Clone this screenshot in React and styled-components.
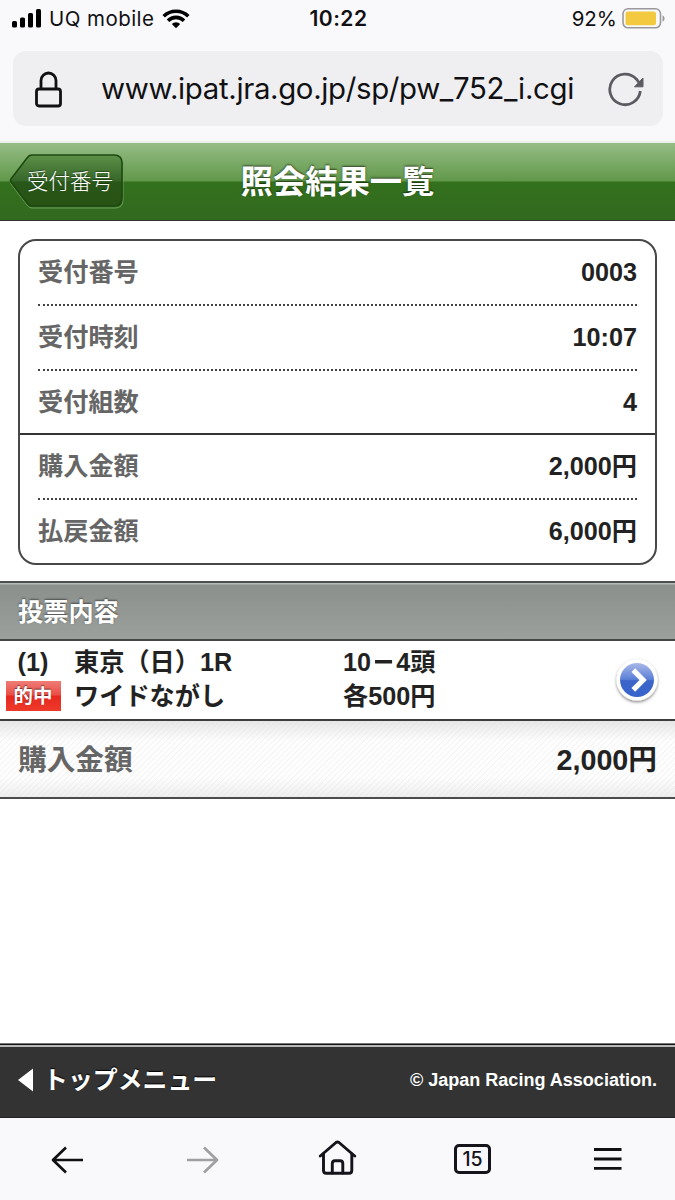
import React from 'react';
import styled, { createGlobalStyle } from "styled-components";

const GlobalStyle = createGlobalStyle`
  * {
    box-sizing: border-box;
  }

  body {
    margin: 0;
    background: #ffffff;
  }
`;

const Screen = styled.div`
  display: flex;
  flex-direction: column;
  width: 675px;
  height: 1200px;
  overflow: hidden;
  background: #ffffff;
  color: #222222;
  font-family: "Liberation Sans", "Noto Sans CJK JP", sans-serif;
  font-weight: 700;
`;

const BrowserTop = styled.div`
  height: 143px;
  flex: none;
  background: #f9f9fc;
  border-bottom: 2px solid #eaf0ea;
  font-family: "Inter", sans-serif;
  font-weight: 400;
  color: #111114;
`;

const StatusBar = styled.div`
  display: grid;
  grid-template-columns: 1fr auto 1fr;
  align-items: center;
  height: 37px;
  padding: 0 10px 0 12px;
  font-size: 20.5px;
  line-height: 37px;
`;

const Carrier = styled.div`
  display: flex;
  align-items: center;
  gap: 8px;
  letter-spacing: 0.45px;

  span {
    margin-left: -1px;
  }
`;

const Clock = styled.div`
  font-size: 21px;
  font-weight: 600;
  letter-spacing: 0.5px;
`;

const Battery = styled.div`
  display: flex;
  align-items: center;
  justify-content: flex-end;
  gap: 5px;
`;

const AddressBar = styled.div`
  display: flex;
  align-items: center;
  height: 75px;
  margin: 14px 12px 0 13px;
  padding: 0 18px 0 21px;
  border-radius: 13px;
  background: #efeff2;
`;

const Url = styled.div`
  flex: 1;
  padding: 1px 0 0 37px;
  font-size: 29.4px;
  letter-spacing: -0.34px;
  line-height: 78px;
  white-space: nowrap;
`;

const Header = styled.header`
  display: grid;
  grid-template-columns: 1fr auto 1fr;
  align-items: center;
  height: 78px;
  flex: none;
  padding: 0 9px;
  border-bottom: 1px solid #333333;
  background: linear-gradient(#96bd86 0, #61984a 38px, #33711d 39px, #32691f 100%);
`;

const BackButton = styled.a`
  position: relative;
  width: 115px;
  height: 56px;
  padding-left: 18px;
  color: #ffffff;
  font-family: "Noto Sans CJK JP", sans-serif;
  font-size: 21.5px;
  font-weight: 300;
  line-height: 52px;
  white-space: nowrap;
  text-shadow: 0 -1px 1px rgba(0, 0, 0, 0.4);

  svg {
    position: absolute;
    left: 0;
    top: -1px;
  }

  span {
    position: relative;
  }
`;

const Title = styled.h1`
  margin: 0;
  color: #ffffff;
  font-size: 32.3px;
  line-height: 74px;
  text-shadow: 0 -1px 2px rgba(0, 0, 0, 0.6);
`;

const Summary = styled.dl`
  height: 326px;
  flex: none;
  margin: 18px 18px 16px;
  border: 2px solid #48484a;
  border-radius: 18px;
`;

const SummaryGroup = styled.div`
  padding: 0 18px;

  & + & {
    border-top: 2px solid #333333;
  }
`;

const SummaryRow = styled.div`
  display: flex;
  justify-content: space-between;
  height: 65px;
  font-size: 25.2px;
  line-height: 62px;

  &:first-child {
    height: 63px;
  }

  &:last-child {
    height: 64px;
  }

  & + & {
    border-top: 2px dotted #444444;
  }
`;

const Label = styled.dt`
  color: #666666;
`;

const Value = styled.dd`
  margin: 0;
`;

const SectionTitle = styled.h2`
  height: 60px;
  flex: none;
  margin: 0;
  padding-left: 18px;
  border-top: 2px solid #4c4f4e;
  border-bottom: 2px solid #454545;
  background: linear-gradient(#b5bab8 0, #b5bab8 1px, #8b908c 2px, #9ba09d 100%);
  color: #ffffff;
  font-size: 25.2px;
  line-height: 58px;
  text-shadow: 0 -1px 2px rgba(0, 0, 0, 0.5);
`;

const Bet = styled.div`
  display: grid;
  grid-template-columns: 62px 269px 1fr 46px;
  align-items: center;
  height: 78px;
  flex: none;
  padding: 0 15px 0 2px;
`;

const BetColumn = styled.div`
  padding: 0 0 2px ${props => (props.$flush ? 0 : "10px")};
  text-align: ${props => (props.$flush ? "center" : "left")};
  font-size: 25.2px;
  line-height: 34px;
  white-space: nowrap;
`;

const HitBadge = styled.div`
  width: 55px;
  height: 30px;
  margin: 2px auto;
  background: linear-gradient(#ee7d77 0, #ea4f46 14px, #e6281f 15px, #ee3a2a 100%);
  color: #ffffff;
  font-size: 19.5px;
  line-height: 30px;
  text-shadow: 0 -1px 1px rgba(0, 0, 0, 0.5);
`;

const Dash = styled.span`
  display: inline-block;
  transform: scaleX(0.9);
  -webkit-text-stroke: 1px #222222;
`;

const Total = styled.div`
  display: flex;
  justify-content: space-between;
  height: 80px;
  flex: none;
  padding: 0 18px;
  border-top: 2px solid #3c3c3c;
  border-bottom: 2px solid #4c4c4c;
  background:
    linear-gradient(rgba(215, 215, 215, 0.6) 0, rgba(255, 255, 255, 0) 20px, rgba(255, 255, 255, 0) 56px, rgba(215, 215, 215, 0.4) 100%),
    repeating-linear-gradient(135deg, #fefefe 0, #fefefe 2.5px, #f3f3f3 3.2px, #f3f3f3 3.5px, #fefefe 4px);
  font-size: 28.7px;
  line-height: 78px;
`;

const TotalLabel = styled.span`
  color: #666666;
`;

const Footer = styled.footer`
  display: flex;
  align-items: center;
  justify-content: space-between;
  height: 75px;
  flex: none;
  margin-top: auto;
  padding: 0 18px;
  border-bottom: 1px solid #222222;
  background: linear-gradient(#777777 0, #777777 1px, #111111 1px, #111111 2px, #b8b8b8 2px, #b8b8b8 4px, #333333 4px);
  color: #ffffff;
`;

const TopMenu = styled.a`
  display: flex;
  align-items: center;
  gap: 9px;
  font-size: 24.9px;
  line-height: 72px;
  text-shadow: 0 -1px 1px #000000;
`;

const Copyright = styled.small`
  font-size: 18.05px;
  line-height: 72px;
`;

const BrowserTools = styled.nav`
  display: grid;
  grid-template-columns: repeat(5, 1fr);
  align-items: center;
  justify-items: center;
  height: 82px;
  flex: none;
  background: #f9f9fc;
`;

const TabCount = styled.div`
  width: 37px;
  height: 30px;
  border: 3px solid #15141a;
  border-radius: 5px;
  color: #15141a;
  font-family: "Inter", sans-serif;
  font-size: 19.5px;
  font-weight: 500;
  line-height: 25px;
  text-align: center;
`;

const summary = [
  [
    { label: '受付番号', value: '0003' },
    { label: '受付時刻', value: '10:07' },
    { label: '受付組数', value: '4' },
  ],
  [
    { label: '購入金額', value: '2,000円' },
    { label: '払戻金額', value: '6,000円' },
  ],
];

const SignalIcon = () => (
  <svg width="30" height="20" viewBox="0 0 30 20">
    <rect x="0" y="12" width="5" height="6.5" rx="1.5" />
    <rect x="8" y="8.5" width="5" height="10" rx="1.5" />
    <rect x="16" y="4" width="5" height="14.5" rx="1.5" />
    <rect x="24" y="0" width="5" height="18.5" rx="1.5" />
  </svg>
);

const WifiIcon = () => (
  <svg width="28" height="20" viewBox="0 0 28 20">
    <g fill="none" stroke="#000" strokeWidth="3.6">
      <path d="M1.7 7.2a17.6 17.6 0 0 1 24.6 0" />
      <path d="M6 11.7a11.4 11.4 0 0 1 16 0" />
    </g>
    <path d="M14 19.3l4.2-4.3a6 6 0 0 0-8.4 0z" />
  </svg>
);

const BatteryIcon = () => (
  <svg width="43" height="22" viewBox="0 0 43 22">
    <rect x="1" y="0.8" width="37.5" height="19" rx="5" fill="none" stroke="#9a9a9e" strokeWidth="1.6" />
    <rect x="3.5" y="3.5" width="30.5" height="13.7" rx="2.5" fill="#f3c940" />
    <path d="M40.5 7.2v6.5a3.6 3.6 0 0 0 0-6.5z" fill="#9a9a9e" />
  </svg>
);

const LockIcon = () => (
  <svg width="30" height="38" viewBox="0 0 30 38" fill="none" stroke="#111114" strokeWidth="2.8">
    <rect x="2.5" y="19" width="24" height="17" rx="2.5" />
    <path d="M7 19V10.500a7.500 7.500 0 0 1 15 0V19" />
  </svg>
);

const ReloadIcon = () => (
  <svg width="37" height="36" viewBox="0 0 37 36">
    <path d="M32.300 20A15.300 15.300 0 1 1 28.500 8.200L31 11.500" fill="none" stroke="#5b5b62" strokeWidth="2.800" />
    <path d="M35 7v8.800H26.500z" fill="#5b5b62" stroke="#5b5b62" strokeLinejoin="round" />
  </svg>
);

const BackShape = () => (
  <svg width="115" height="56" viewBox="0 0 115 56">
    <defs>
      <linearGradient id="back" x1="0" y1="0" x2="0" y2="1">
        <stop offset="0" stopColor="#5d9048" />
        <stop offset="0.5" stopColor="#37672a" />
        <stop offset="0.53" stopColor="#285719" />
        <stop offset="1" stopColor="#285314" />
      </linearGradient>
    </defs>
    <path d="M23 3H106Q114 3 114 11V47Q114 55 106 55H23Q20 55 18 52L2 31Q1 29 2 27L18 6Q20 3 23 3Z" fill="none" stroke="#6d9f5a" strokeWidth="1" />
    <path d="M23 2H105Q113 2 113 10V45Q113 53 105 53H23Q20 53 18 50L2 29Q1 27.500 2 26L18 5Q20 2 23 2Z" fill="url(#back)" stroke="#1d4910" strokeWidth="1.600" />
  </svg>
);

const DetailIcon = () => (
  <svg width="46" height="50" viewBox="0 0 46 50">
    <defs>
      <linearGradient id="blue" x1="0" y1="0" x2="0" y2="1">
        <stop offset="0" stopColor="#a9b9e8" />
        <stop offset="0.48" stopColor="#5c80d6" />
        <stop offset="0.52" stopColor="#3d65c9" />
        <stop offset="1" stopColor="#3664cd" />
      </linearGradient>
      <filter id="shadow" x="-20%" y="-20%" width="140%" height="150%">
        <feDropShadow dx="0" dy="1.5" stdDeviation="1.5" floodOpacity="0.5" />
      </filter>
    </defs>
    <circle cx="23" cy="25" r="20.500" fill="#fff" filter="url(#shadow)" />
    <circle cx="23" cy="25" r="17" fill="url(#blue)" />
    <path d="M19.300 15.200l9.800 9.800-9.800 9.800" fill="none" stroke="#fff" strokeWidth="5.200" />
  </svg>
);

const ArrowIcon = ({ forward }) => (
  <svg width="34" height="30" viewBox="0 -1 34 30" fill="none" stroke={forward ? "#a0a0a3" : "#111114"} strokeWidth="2.700" strokeLinejoin="round">
    {forward
      ? <path d="M1 15h30M18 2.500L31 15 18 27.500" />
      : <path d="M32 15H2M15 2.500L2 15 15 27.500" />}
  </svg>
);

const HomeIcon = () => (
  <svg width="40" height="38" viewBox="0 0 40 38" fill="none" stroke="#15141a" strokeWidth="2.900" strokeLinecap="round" strokeLinejoin="round">
    <path d="M2.300 16L18 2.500Q19.500 1.400 21 2.500L36.700 16" />
    <path d="M5.500 14V30.500Q5.500 33.300 8.300 33.300H31Q33.800 33.300 33.800 30.500V14" />
    <path d="M14.300 33V23.500Q14.300 20.700 17.100 20.700H22Q24.800 20.700 24.800 23.500V33" />
  </svg>
);

const MenuIcon = () => (
  <svg width="28" height="24" viewBox="0 0 28 24" stroke="#111114" strokeWidth="2.800">
    <path d="M0 2.500h27.500M0 12h27.500M0 21.300h27.500" />
  </svg>
);

function App() {
  return (
    <Screen>
      <GlobalStyle />
      <BrowserTop>
        <StatusBar>
          <Carrier>
            <SignalIcon />
            <span>UQ mobile</span>
            <WifiIcon />
          </Carrier>
          <Clock>10:22</Clock>
          <Battery>
            <span>92%</span>
            <BatteryIcon />
          </Battery>
        </StatusBar>
        <AddressBar>
          <LockIcon />
          <Url>www.ipat.jra.go.jp/sp/pw_752_i.cgi</Url>
          <ReloadIcon />
        </AddressBar>
      </BrowserTop>

      <Header>
        <BackButton>
          <BackShape />
          <span>受付番号</span>
        </BackButton>
        <Title>照会結果一覧</Title>
      </Header>

      <Summary>
        {summary.map((group, i) => (
          <SummaryGroup key={i}>
            {group.map(({ label, value }) => (
              <SummaryRow key={label}>
                <Label>{label}</Label>
                <Value>{value}</Value>
              </SummaryRow>
            ))}
          </SummaryGroup>
        ))}
      </Summary>

      <SectionTitle>投票内容</SectionTitle>
      <Bet>
        <BetColumn $flush>
          <div>(1)</div>
          <HitBadge>的中</HitBadge>
        </BetColumn>
        <BetColumn>
          <div>東京（日）1R</div>
          <div>ワイドながし</div>
        </BetColumn>
        <BetColumn>
          <div>10<Dash>－</Dash>4頭</div>
          <div>各500円</div>
        </BetColumn>
        <DetailIcon />
      </Bet>
      <Total>
        <TotalLabel>購入金額</TotalLabel>
        <span>2,000円</span>
      </Total>

      <Footer>
        <TopMenu>
          <svg width="16" height="24" viewBox="0 0 16 24" fill="#fff">
            <path d="M0 12L15 0.500V23.500z" />
          </svg>
          <span>トップメニュー</span>
        </TopMenu>
        <Copyright>© Japan Racing Association.</Copyright>
      </Footer>
      <BrowserTools>
        <ArrowIcon />
        <ArrowIcon forward />
        <HomeIcon />
        <TabCount>15</TabCount>
        <MenuIcon />
      </BrowserTools>
    </Screen>
  );
}

export default App;
